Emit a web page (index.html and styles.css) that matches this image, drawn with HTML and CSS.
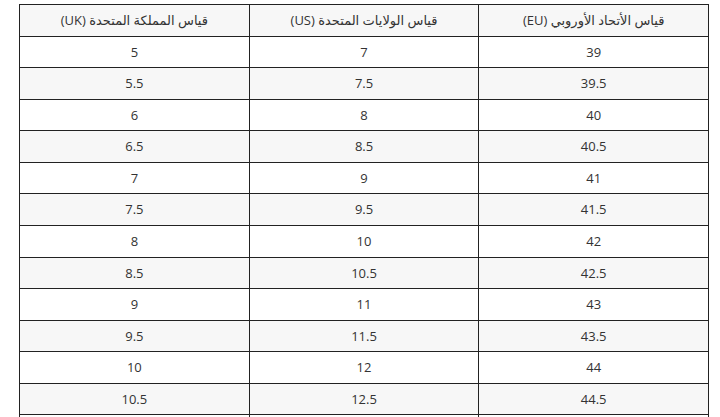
FILE: index.html
```html
<!DOCTYPE html>
<html lang="ar" dir="rtl">
<head>
<meta charset="utf-8">
<link rel="stylesheet" href="styles.css">
</head>
<body>
<div class="wrap">
<table class="sizes">
<thead>
<tr><th>قياس الأتحاد الأوروبي (EU)</th><th>قياس الولايات المتحدة (US)</th><th>قياس المملكة المتحدة (UK)</th></tr>
</thead>
<tbody>
<tr><td>39</td><td>7</td><td>5</td></tr>
<tr><td>39.5</td><td>7.5</td><td>5.5</td></tr>
<tr><td>40</td><td>8</td><td>6</td></tr>
<tr><td>40.5</td><td>8.5</td><td>6.5</td></tr>
<tr><td>41</td><td>9</td><td>7</td></tr>
<tr><td>41.5</td><td>9.5</td><td>7.5</td></tr>
<tr><td>42</td><td>10</td><td>8</td></tr>
<tr><td>42.5</td><td>10.5</td><td>8.5</td></tr>
<tr><td>43</td><td>11</td><td>9</td></tr>
<tr><td>43.5</td><td>11.5</td><td>9.5</td></tr>
<tr><td>44</td><td>12</td><td>10</td></tr>
<tr><td>44.5</td><td>12.5</td><td>10.5</td></tr>
<tr><td>45</td><td>13</td><td>11</td></tr>
</tbody>
</table>
</div>
</body>
</html>
```
FILE: styles.css
```css
html, body {
  margin: 0;
  padding: 0;
  background: #fff;
}
body {
  font-family: "Open Sans", "DejaVu Sans", sans-serif;
  font-size: 13px;
  color: #333;
}
.wrap {
  padding: 4px 11px 0 19px;
}
.sizes {
  width: 100%;
  border-collapse: collapse;
  table-layout: fixed;
}
.sizes th,
.sizes td {
  border: 1px solid #222;
  text-align: center;
  padding: 6px 8px;
  line-height: 1.42857;
  font-weight: normal;
}
.sizes thead tr,
.sizes tbody tr:nth-child(even) {
  background: #f7f7f7;
}
```
